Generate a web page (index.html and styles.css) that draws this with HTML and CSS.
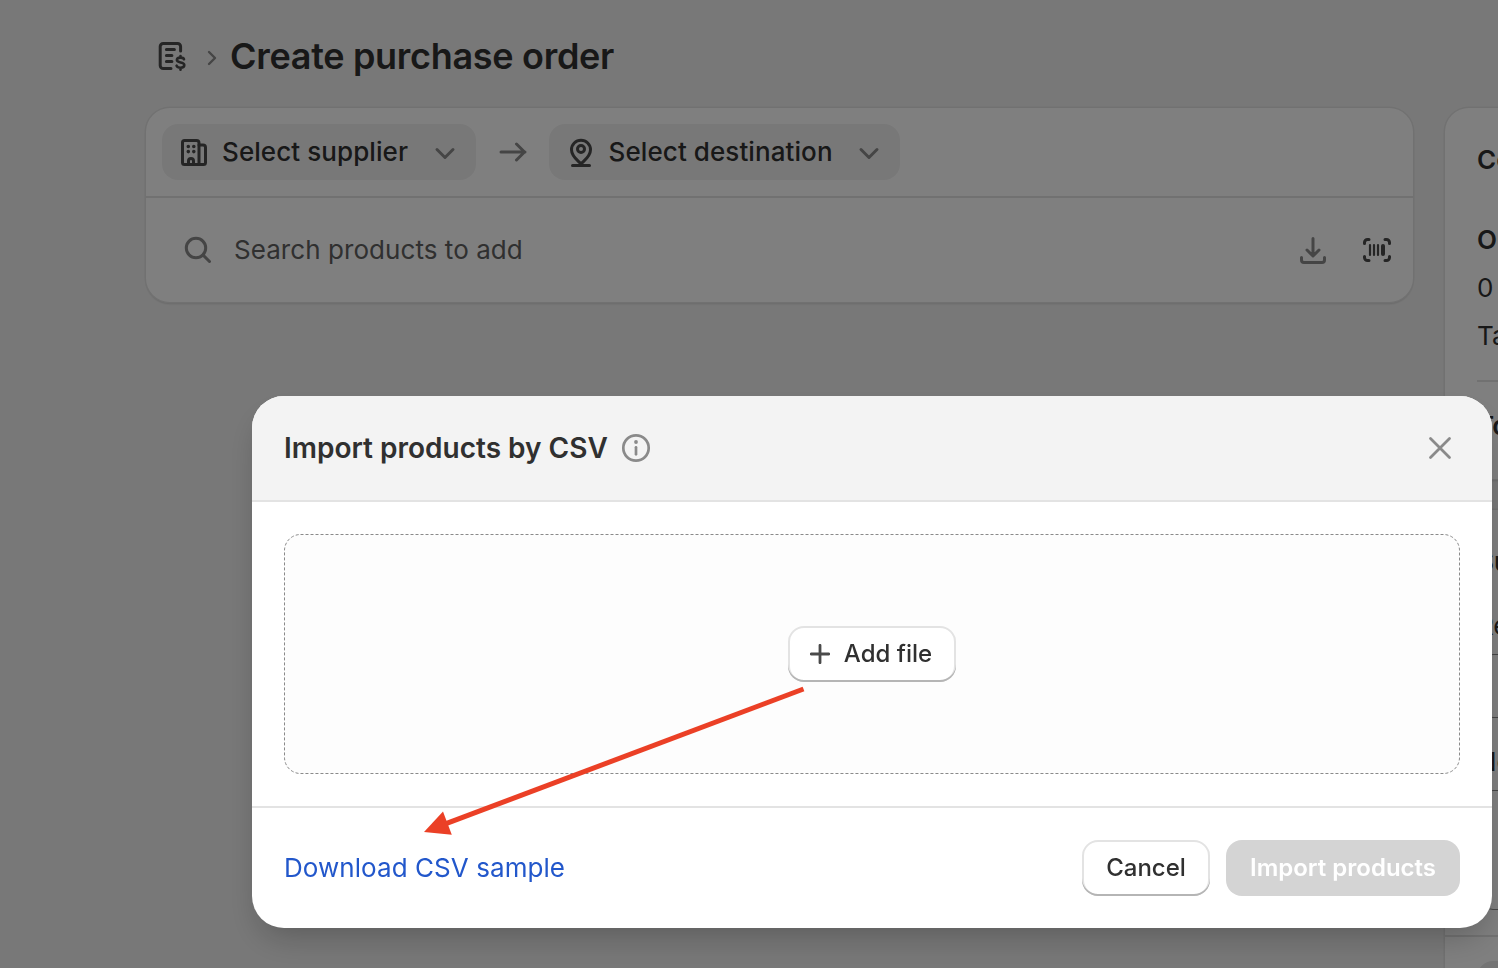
FILE: index.html
```html
<!DOCTYPE html>
<html lang="en">
<head>
    <meta charset="UTF-8">
    <meta name="viewport" content="width=device-width, initial-scale=1.0">
    <title>Create purchase order</title>
    <link rel="stylesheet" href="styles.css">
</head>
<body>
    <div class="page">
        <header class="page-header">
            <svg class="icon" viewBox="0 0 40 40">
                <path d="M28.600 15V10.500a3 3 0 0 0-3-3H11.200a3 3 0 0 0-3 3v19a3 3 0 0 0 3 3H19"/>
                <path d="M14.400 13.400h8M14.400 19.400h5.500M14.400 25.600h5.500"/>
                <path class="dollar" d="M32 23.200c-.5-1.200-2-1.600-3.700-1.600-2 0-3.400.8-3.400 2.500 0 3.400 7.400 1.500 7.400 5 0 1.700-1.500 2.600-3.700 2.600-1.900 0-3.400-.6-4-2M28.500 20v1.500M28.500 32v1.800"/>
            </svg>
            <svg class="crumb" viewBox="0 0 12 18"><path d="M3 3l6 6-6 6"/></svg>
            <h1>Create purchase order</h1>
        </header>
        <div class="columns">
            <section class="card order-card">
                <div class="route">
                    <button class="pill">
                        <svg class="icon" viewBox="0 0 40 40">
                            <path d="M10.500 8.500h12a2.500 2.500 0 0 1 2.500 2.500v21.500H10.500a2 2 0 0 1-2-2v-20a2 2 0 0 1 2-2z"/>
                            <path d="M25 13h4a2.500 2.500 0 0 1 2.500 2.500v15a2 2 0 0 1-2 2H25M14.500 32v-3a2.500 2.500 0 0 1 5 0v3"/>
                            <path class="dots" d="M14.300 14.500h.01M19.800 14.500h.01M14.300 19.600h.01M19.800 19.600h.01"/>
                        </svg>
                        <span>Select supplier</span>
                        <svg class="chevron" viewBox="0 0 24 24"><path d="M4 8.500l8 8 8-8"/></svg>
                    </button>
                    <svg class="arrow-right" viewBox="0 0 28 24"><path d="M2 12h24M17.500 4l8 8-8 8"/></svg>
                    <button class="pill">
                        <svg class="icon" viewBox="0 0 40 40">
                            <path d="M20 32c-3-3.500-9.500-7.500-9.500-14.300a9.500 9.500 0 0 1 19 0C29.500 24.500 23 28.500 20 32zM11.500 33.500h17"/>
                            <circle cx="20" cy="17" r="3.500"/>
                        </svg>
                        <span>Select destination</span>
                        <svg class="chevron" viewBox="0 0 24 24"><path d="M4 8.500l8 8 8-8"/></svg>
                    </button>
                </div>
                <div class="search">
                    <svg class="icon muted" viewBox="0 0 40 40"><circle cx="18" cy="18" r="9.700"/><path d="M25 25l6.500 6.500"/></svg>
                    <span class="placeholder">Search products to add</span>
                    <svg class="icon muted" viewBox="0 0 40 40"><path d="M20 8.500v17M14 20l6 6 6-6M8.500 27.500v2.500a2.500 2.500 0 0 0 2.500 2.500h18a2.500 2.500 0 0 0 2.500-2.500v-2.500"/></svg>
                    <svg class="icon" viewBox="0 0 40 40">
                        <path d="M7.500 13.500v-1a3 3 0 0 1 3-3h1.500M28 9.500h1.500a3 3 0 0 1 3 3v1M32.500 26.500v1a3 3 0 0 1-3 3H28M12 30.500h-1.500a3 3 0 0 1-3-3v-1"/>
                        <path class="bars" d="M13 15v10M17 15v10M21 15v10"/>
                        <path class="bar-wide" d="M26 16v8"/>
                    </svg>
                </div>
            </section>
            <aside class="side">
                <section class="card cost">
                    <h2>Cost summary</h2>
                    <h3>Order</h3>
                    <p>0 items</p>
                    <p>Taxes</p>
                    <hr>
                    <h3 class="total">Total</h3>
                </section>
                <section class="card details">
                    <div class="details-main">
                        <h2>Supplement</h2>
                        <label>Reference</label>
                        <div class="field"></div>
                        <label>Note</label>
                        <div class="field tall"></div>
                    </div>
                    <div class="details-tags"><span class="tag"></span></div>
                </section>
            </aside>
        </div>
    </div>

    <div class="backdrop"></div>

    <div class="modal">
        <header class="modal-header">
            <h2>Import products by CSV</h2>
            <svg class="info" viewBox="0 0 30 30"><circle cx="15" cy="15" r="12.700"/><path d="M15 14.300v7"/><circle class="dot" cx="15" cy="9" r="1.900"/></svg>
            <svg class="close" viewBox="0 0 24 24"><path d="M2.500 2.500l19 19M21.500 2.500l-19 19"/></svg>
        </header>
        <div class="modal-body">
            <div class="dropzone">
                <svg class="outline"><rect x=".5" y=".5" width="1175" height="239" rx="16"/></svg>
                <button class="btn add">
                    <svg class="plus" viewBox="0 0 20 20"><path d="M10 1.300v17.400M1.300 10h17.400"/></svg>
                    Add file
                </button>
            </div>
        </div>
        <footer class="modal-footer">
            <a class="link">Download CSV sample</a>
            <button class="btn cancel">Cancel</button>
            <button class="btn disabled">Import products</button>
        </footer>
    </div>

    <svg class="pointer" viewBox="0 0 390 156">
        <path class="shaft" d="M383.500 9L24 144.300"/>
        <path class="head" d="M4 152L23 131.500l8.800 23.200z"/>
    </svg>
</body>
</html>
```
FILE: styles.css
```css
* { box-sizing: border-box; }
body { margin: 0; height: 968px; overflow: hidden; background: #f1f1f1; color: #303030; font-family: Inter, sans-serif; font-size: 26px; }
h1, h2, h3, p { margin: 0; }
button { font-family: inherit; border: none; white-space: nowrap; }

svg { flex: none; fill: none; stroke: #4a4a4a; stroke-width: 3; stroke-linecap: round; stroke-linejoin: round; }
.icon { width: 40px; height: 40px; }
.muted { stroke: #8a8a8a; }
.dollar { stroke-width: 2.6; }
.dots { stroke-width: 3.6; }
.bars { stroke-width: 2.2; }
.bar-wide { stroke-width: 4; }

/* page behind the modal */
.page { width: 1498px; height: 968px; overflow: hidden; padding: 35px 0 0 146px; }
.page-header { display: flex; align-items: center; height: 42px; padding-left: 6px; }
.crumb { width: 12px; height: 18px; margin: 3px 12px 0 14px; stroke: #8a8a8a; stroke-width: 2.4; }
h1 { font-size: 36px; font-weight: 600; line-height: 42px; letter-spacing: -0.3px; }
.columns { display: flex; align-items: flex-start; gap: 32px; margin-top: 31px; }
.card { flex: none; background: #fff; border-radius: 24px; box-shadow: 0 0 0 1.5px #e3e3e3, 0 2px 2px rgba(0, 0, 0, 0.16); }
.order-card { width: 1267px; height: 194px; }
.route { display: flex; align-items: center; height: 90px; padding: 16px; border-bottom: 2px solid #e3e3e3; }
.pill { display: flex; align-items: center; height: 56px; padding: 0 19px 0 12px; border-radius: 16px; background: #f1f1f1; color: #303030; font-size: 26px; font-weight: 550; letter-spacing: 0.08px; }
.pill span { margin: -2px 24.5px 0 8px; }
.chevron { width: 24px; height: 24px; margin-top: 2px; stroke: #8a8a8a; }
.arrow-right { width: 28px; height: 24px; margin: 0 22px 0 23px; stroke: #8a8a8a; }
.search { display: flex; align-items: center; height: 104px; padding: 0 16px 0 32px; }
.placeholder { flex: 1; margin: -2px 0 0 16px; color: #616161; letter-spacing: 0.06px; }
.search .icon:last-child { margin-left: 24px; }

.side { flex: none; width: 400px; }
.cost { height: 371px; padding: 32px; }
.side h2, .side h3 { font-size: 26px; font-weight: 600; line-height: 40px; }
.cost h3 { margin-top: 40px; }
.cost p { margin-top: 8px; line-height: 40px; }
.cost hr { height: 2px; margin: 24px 0; border: none; background: #e3e3e3; }
.cost .total { margin: 0; }
.details { margin-top: 31px; }
.details-main { height: 425px; padding: 32px; }
.details label { display: block; margin-top: 24px; line-height: 40px; }
.field { height: 64px; margin-top: 8px; border: 1px solid #8a8a8a; border-radius: 16px; }
.field.tall { height: 120px; }
.details-tags { height: 120px; padding: 24px 32px; border-top: 2px solid #e3e3e3; }
.tag { display: block; width: 140px; height: 40px; border-radius: 16px; background: #e8e8e8; }

.backdrop { position: fixed; inset: 0; background: rgba(0, 0, 0, 0.5); }

/* import modal */
.modal { position: fixed; left: 252px; top: 396px; width: 1240px; height: 532px; border-radius: 32px; background: #fff; overflow: hidden; box-shadow: 0 16px 32px -8px rgba(0, 0, 0, 0.24); }
.modal-header { display: flex; align-items: center; height: 106px; padding: 0 40px 0 32px; border-bottom: 2px solid #e3e3e3; background: #f3f3f3; }
.modal-header h2 { font-size: 28px; font-weight: 600; }
.info { width: 30px; height: 30px; margin-left: 13px; stroke: #8a8a8a; stroke-width: 2.7; }
.info .dot { fill: #8a8a8a; stroke: none; }
.close { width: 24px; height: 24px; margin-left: auto; stroke: #8a8a8a; stroke-width: 2.8; }
.modal-body { padding: 32px; }
.dropzone { display: flex; align-items: center; justify-content: center; position: relative; height: 240px; border-radius: 16px; background: #fdfdfd; }
.outline { position: absolute; inset: 0; width: 100%; height: 100%; stroke: #8a8a8a; stroke-width: 1; stroke-linecap: butt; stroke-dasharray: 3 2; }
.btn { display: flex; align-items: center; justify-content: center; height: 56px; padding: 0 24px 1px; border-radius: 16px; background: #fff; color: #303030; font-size: 24px; font-weight: 550; box-shadow: inset 0 -2px 0 #b5b5b5, inset 0 0 0 2px #e3e3e3; }
.add { position: relative; width: 168px; padding: 0 22px 1px 20px; gap: 14px; }
.plus { width: 20px; height: 20px; stroke-width: 2.8; }
.modal-footer { display: flex; align-items: center; gap: 16px; height: 122px; padding: 0 32px; border-top: 2px solid #e3e3e3; }
.link { flex: 1; color: #2257cb; letter-spacing: 0.06px; margin-top: -2px; }
.cancel { width: 128px; }
.disabled { width: 234px; background: #d4d4d4; color: #fff; font-weight: 600; box-shadow: none; }

/* annotation arrow */
.pointer { position: absolute; left: 420px; top: 680px; width: 390px; height: 156px; stroke: none; }
.shaft { stroke: #eb4026; stroke-width: 5; stroke-linecap: butt; }
.head { fill: #eb4026; }
```
